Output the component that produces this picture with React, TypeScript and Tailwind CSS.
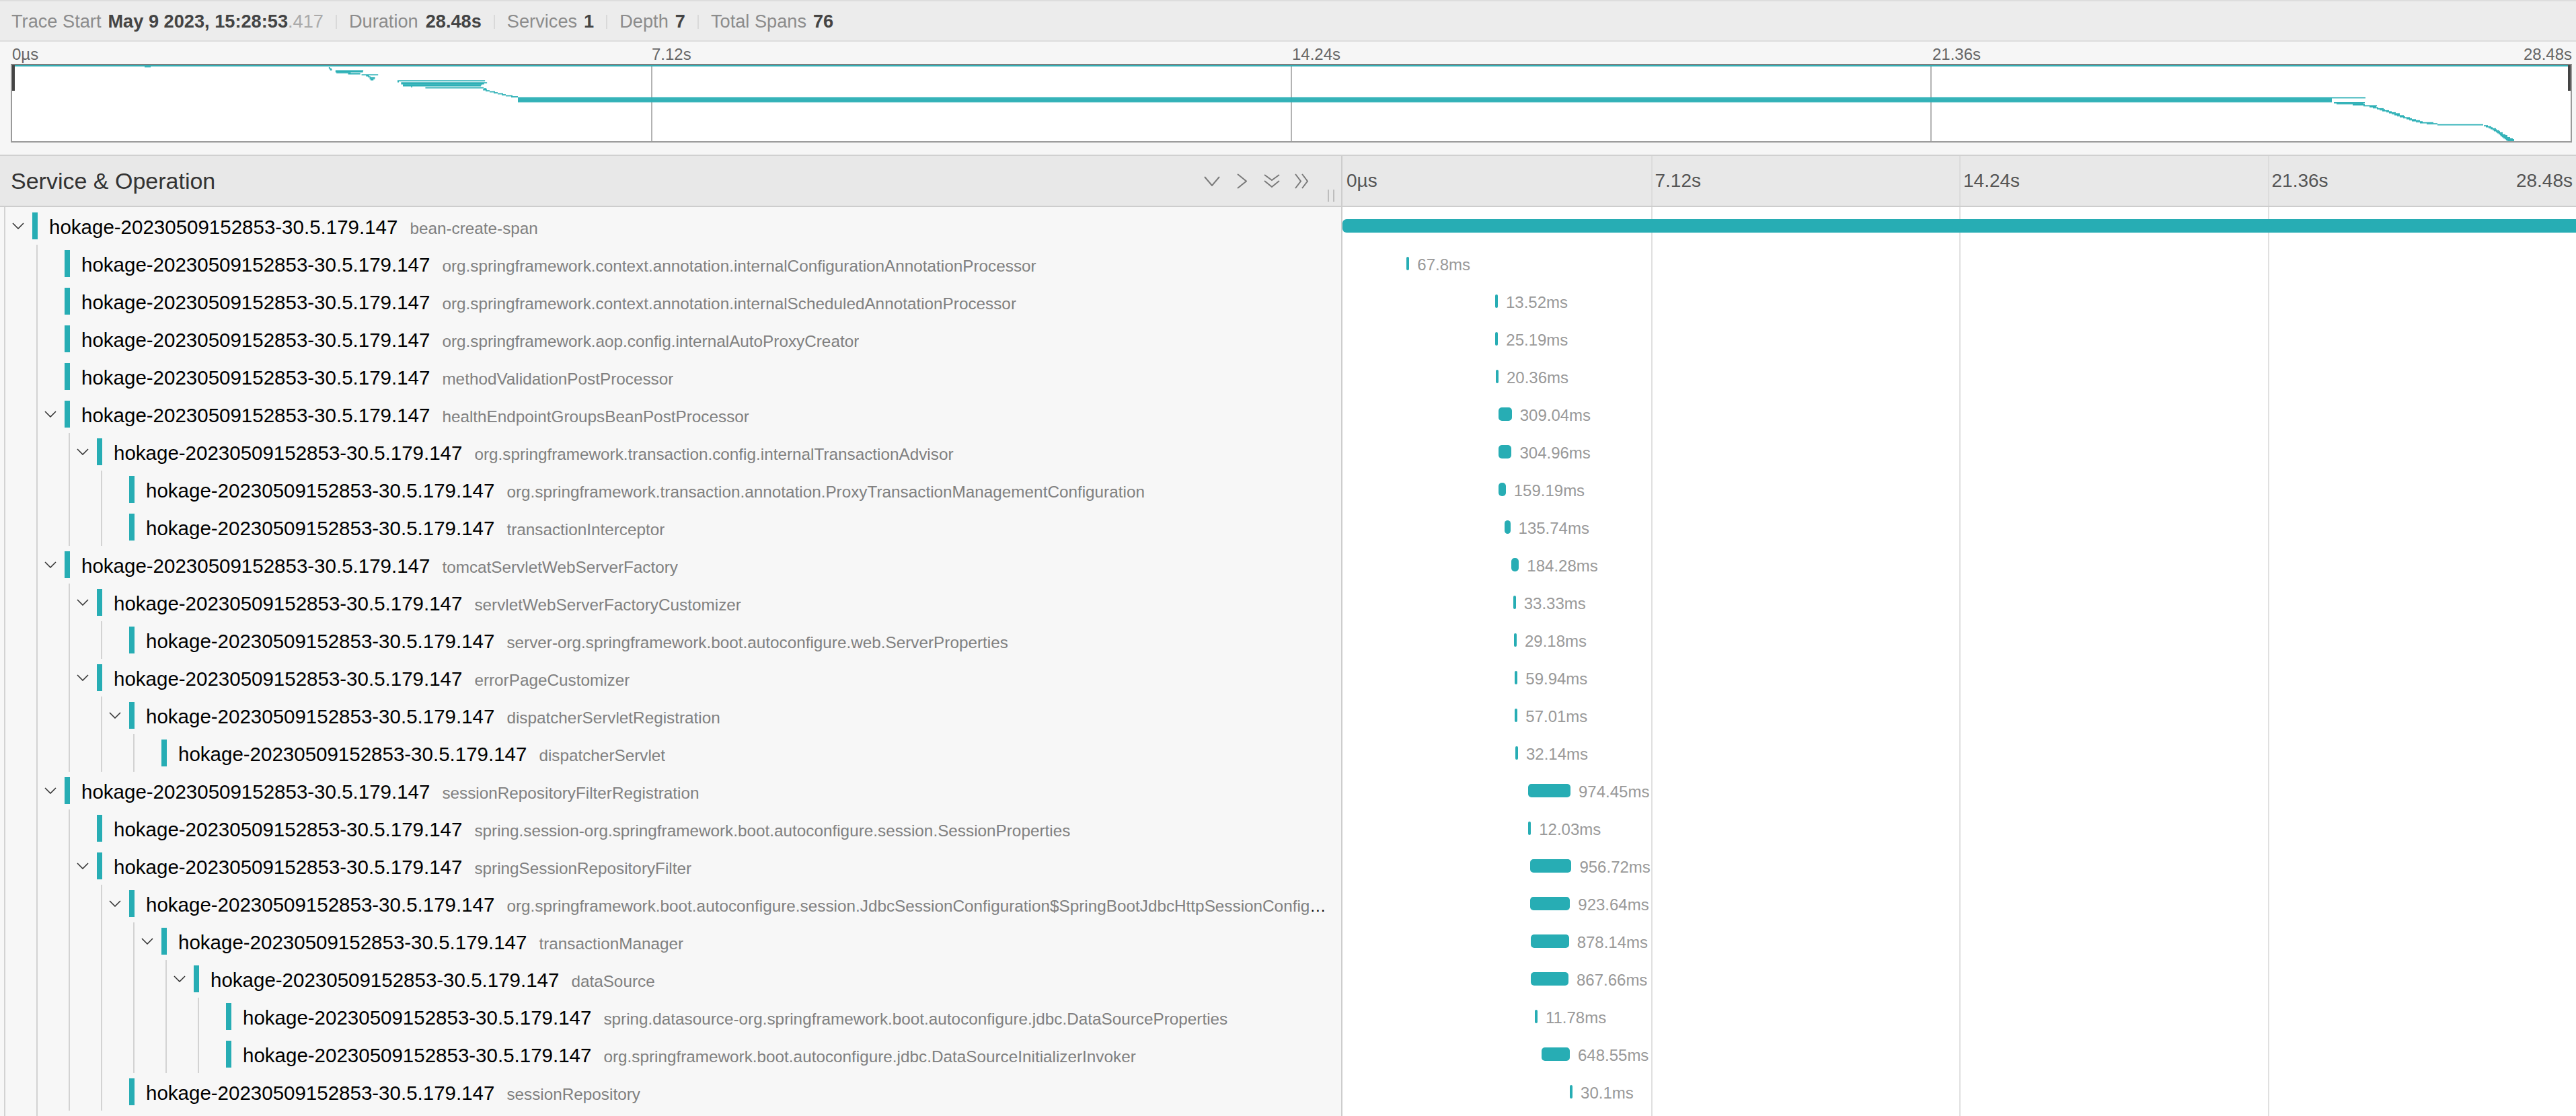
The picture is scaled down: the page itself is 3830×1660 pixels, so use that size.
import React from "react";

const SVC = "hokage-20230509152853-30.5.179.147";
const PX_PER_S = 1834 / 28.48;
const MINI_W = 3804;
const MINI_H = 113;

type Row = {
  d: number;
  op: string;
  kids?: boolean;
  s: number;
  ms: number;
  label?: string;
};

const rows: Row[] = [
  { d: 0, op: "bean-create-span", kids: true, s: 0, ms: 28480 },
  { d: 1, op: "org.springframework.context.annotation.internalConfigurationAnnotationProcessor", s: 1.475, ms: 67.8, label: "67.8ms" },
  { d: 1, op: "org.springframework.context.annotation.internalScheduledAnnotationProcessor", s: 3.525, ms: 13.52, label: "13.52ms" },
  { d: 1, op: "org.springframework.aop.config.internalAutoProxyCreator", s: 3.53, ms: 25.19, label: "25.19ms" },
  { d: 1, op: "methodValidationPostProcessor", s: 3.54, ms: 20.36, label: "20.36ms" },
  { d: 1, op: "healthEndpointGroupsBeanPostProcessor", kids: true, s: 3.6, ms: 309.04, label: "309.04ms" },
  { d: 2, op: "org.springframework.transaction.config.internalTransactionAdvisor", kids: true, s: 3.6, ms: 304.96, label: "304.96ms" },
  { d: 3, op: "org.springframework.transaction.annotation.ProxyTransactionManagementConfiguration", s: 3.61, ms: 159.19, label: "159.19ms" },
  { d: 3, op: "transactionInterceptor", s: 3.74, ms: 135.74, label: "135.74ms" },
  { d: 1, op: "tomcatServletWebServerFactory", kids: true, s: 3.89, ms: 184.28, label: "184.28ms" },
  { d: 2, op: "servletWebServerFactoryCustomizer", kids: true, s: 3.94, ms: 33.33, label: "33.33ms" },
  { d: 3, op: "server-org.springframework.boot.autoconfigure.web.ServerProperties", s: 3.96, ms: 29.18, label: "29.18ms" },
  { d: 2, op: "errorPageCustomizer", kids: true, s: 3.98, ms: 59.94, label: "59.94ms" },
  { d: 3, op: "dispatcherServletRegistration", kids: true, s: 3.98, ms: 57.01, label: "57.01ms" },
  { d: 4, op: "dispatcherServlet", s: 3.99, ms: 32.14, label: "32.14ms" },
  { d: 1, op: "sessionRepositoryFilterRegistration", kids: true, s: 4.29, ms: 974.45, label: "974.45ms" },
  { d: 2, op: "spring.session-org.springframework.boot.autoconfigure.session.SessionProperties", s: 4.29, ms: 12.03, label: "12.03ms" },
  { d: 2, op: "springSessionRepositoryFilter", kids: true, s: 4.33, ms: 956.72, label: "956.72ms" },
  { d: 3, op: "org.springframework.boot.autoconfigure.session.JdbcSessionConfiguration$SpringBootJdbcHttpSessionConfiguration", kids: true, s: 4.33, ms: 923.64, label: "923.64ms" },
  { d: 4, op: "transactionManager", kids: true, s: 4.35, ms: 878.14, label: "878.14ms" },
  { d: 5, op: "dataSource", kids: true, s: 4.35, ms: 867.66, label: "867.66ms" },
  { d: 6, op: "spring.datasource-org.springframework.boot.autoconfigure.jdbc.DataSourceProperties", s: 4.44, ms: 11.78, label: "11.78ms" },
  { d: 6, op: "org.springframework.boot.autoconfigure.jdbc.DataSourceInitializerInvoker", s: 4.6, ms: 648.55, label: "648.55ms" },
  { d: 3, op: "sessionRepository", s: 5.25, ms: 30.1, label: "30.1ms" },
];

// rest of the 76 spans for the minimap, [x, w] in minimap px
const extraMini: [number, number][] = [
  [700, 6], [704, 6], [710, 8], [716, 6], [722, 8], [728, 6], [734, 10], [742, 10],
  [752, 2747], [752, 2697], [752, 2697], [752, 2697], [752, 2697],
  [3452, 46], [3456, 40], [3480, 18], [3496, 20], [3505, 10], [3510, 8],
  [3516, 10], [3520, 8], [3524, 10], [3530, 8], [3534, 10], [3538, 12],
  [3542, 8], [3546, 10], [3550, 8], [3555, 10], [3560, 8], [3564, 10],
  [3568, 12], [3574, 10], [3580, 20], [3590, 16], [3606, 68], [3675, 6],
  [3678, 8], [3682, 6], [3685, 8], [3688, 6], [3690, 8], [3693, 6],
  [3695, 8], [3697, 6], [3699, 8], [3700, 10], [3702, 8], [3704, 10],
  [3706, 12], [3708, 12], [3710, 10],
];

const miniSpans: [number, number][] = [
  ...rows.map((r): [number, number] => [
    (r.s / 28.48) * MINI_W,
    r.d === 0 ? MINI_W : Math.max(2, (r.ms / 1000 / 28.48) * MINI_W),
  ]),
  ...extraMini,
];

const Chevron = () => (
  <svg width="18" height="10" viewBox="0 0 18 10" className="ml-[10px] flex-none">
    <polyline points="1,1 9,9 17,1" fill="none" stroke="#333" strokeWidth="1.6" />
  </svg>
);

const Guides = ({ d, kids }: { d: number; kids?: boolean }) => (
  <>
    {Array.from({ length: d + 1 }).map((_, k) => (
      <span key={k} className="flex h-full w-[48px] flex-none items-center">
        <span className="ml-[6px] h-full w-[2px] flex-none bg-[#d3d3d3]" />
        {k === d && kids && <Chevron />}
      </span>
    ))}
  </>
);

const Sep = () => <span className="mx-[18px] h-[21px] w-[2px] bg-[#d9d9d9]" />;

const Minimap = () => {
  const rowH = MINI_H / 76;
  return (
    <svg width={MINI_W} height={MINI_H} viewBox={`0 0 ${MINI_W} ${MINI_H}`} className="block">
      {[951, 1902, 2853].map((x) => (
        <line key={x} x1={x} x2={x} y1={0} y2={MINI_H} stroke="#9a9a9a" strokeWidth="1.5" />
      ))}
      {miniSpans.map(([x, w], i) => (
        <rect key={i} x={x} y={i * rowH} width={w} height={rowH + 0.3} fill="#2db0b6" />
      ))}
      <rect x={0} y={0} width={4} height={38} fill="#444" />
      <rect x={MINI_W - 4} y={0} width={4} height={38} fill="#444" />
    </svg>
  );
};

const HeaderIcons = () => (
  <div className="flex items-center self-stretch pr-[10px]">
    <svg width="24" height="15" viewBox="0 0 24 15">
      <polyline points="1,1 12,14 23,1" fill="none" stroke="#7a7a7a" strokeWidth="2" />
    </svg>
    <svg width="15" height="23" viewBox="0 0 15 23" className="ml-[25px]">
      <polyline points="1,1 14,11.5 1,22" fill="none" stroke="#7a7a7a" strokeWidth="2" />
    </svg>
    <svg width="24" height="21" viewBox="0 0 24 21" className="ml-[25px]">
      <polyline points="1,1 12,9 23,1" fill="none" stroke="#7a7a7a" strokeWidth="2" />
      <polyline points="1,10 12,19 23,10" fill="none" stroke="#7a7a7a" strokeWidth="2" />
    </svg>
    <svg width="21" height="23" viewBox="0 0 21 23" className="ml-[22px]">
      <polyline points="1,1 9,11.5 1,22" fill="none" stroke="#7a7a7a" strokeWidth="2" />
      <polyline points="11,1 19,11.5 11,22" fill="none" stroke="#7a7a7a" strokeWidth="2" />
    </svg>
    <div className="mb-[6px] ml-[28px] flex h-[18px] gap-[6px] self-end">
      <span className="w-[2px] bg-[#bdbdbd]" />
      <span className="w-[2px] bg-[#bdbdbd]" />
    </div>
  </div>
);

export default function App() {
  return (
    <div className="h-[1660px] w-[3830px] overflow-hidden bg-white font-['Liberation_Sans',Arial,sans-serif]">
      {/* trace summary */}
      <div className="flex h-[62px] items-center border-y-2 border-[#dddddd] bg-[#ececec] px-[17px] pt-[3px] text-[27.2px] text-[#8c8c8c]">
        <span>Trace Start</span>
        <span className="ml-[10px] font-bold text-[#444]">
          May 9 2023, 15:28:53<span className="font-normal text-[#aaa]">.417</span>
        </span>
        <Sep />
        <span>Duration</span>
        <span className="ml-[11px] font-bold text-[#444]">28.48s</span>
        <Sep />
        <span>Services</span>
        <span className="ml-[10px] font-bold text-[#444]">1</span>
        <Sep />
        <span>Depth</span>
        <span className="ml-[10px] font-bold text-[#444]">7</span>
        <Sep />
        <span>Total Spans</span>
        <span className="ml-[10px] font-bold text-[#444]">76</span>
      </div>

      {/* minimap */}
      <div className="border-b-2 border-[#d0d0d0] bg-[#f6f6f6] pb-[18px] pl-[16px] pr-[6px] pt-[4px]">
        <div className="grid h-[29px] grid-cols-4 items-center text-[24px] leading-none text-[#666]">
          <span className="pl-[2px]">0µs</span>
          <span className="pl-[1px]">7.12s</span>
          <span className="pl-[1px]">14.24s</span>
          <div className="flex justify-between pl-[1px]">
            <span>21.36s</span>
            <span>28.48s</span>
          </div>
        </div>
        <div className="h-[117px] border-2 border-[#9a9a9a] border-t-[#7d7d7d] bg-white">
          <Minimap />
        </div>
      </div>

      {/* column header */}
      <div className="flex h-[76px] border-b-2 border-[#cdcdcd] bg-[#e8e8e8]">
        <div className="flex w-[1994px] flex-none items-center justify-between pl-[16px]">
          <span className="text-[34px] text-[#333]">Service &amp; Operation</span>
          <HeaderIcons />
        </div>
        <div className="grid flex-1 grid-cols-4 border-l-2 border-[#cdcdcd] text-[28px] text-[#555]">
          <div className="flex items-center pl-[6px]">0µs</div>
          <div className="flex items-center border-l-2 border-[#dcdcdc] pl-[4px]">7.12s</div>
          <div className="flex items-center border-l-2 border-[#dcdcdc] pl-[4px]">14.24s</div>
          <div className="flex items-center justify-between border-l-2 border-[#dcdcdc] pl-[4px] pr-[5px]">
            <span>21.36s</span>
            <span>28.48s</span>
          </div>
        </div>
      </div>

      {/* span rows */}
      <div className="flex">
        <div className="w-[1994px] flex-none bg-[#f7f7f7]">
          {rows.map((r, i) => (
            <div key={i} className="flex h-[56px] items-center pr-[11px]">
              <Guides d={r.d} kids={r.kids} />
              <span className="h-[40px] w-[8px] flex-none bg-[#27adb4]" />
              <div className="ml-[17px] mt-[4px] min-w-0 truncate text-[24.3px] text-black">
                <span className="text-[29.5px]">{SVC}</span>
                <span className="ml-[18px] text-[#808080]">{r.op}</span>
              </div>
            </div>
          ))}
          {/* next row, only its guides show above the fold */}
          <div className="flex h-[56px] items-center">
            <Guides d={1} />
          </div>
        </div>
        <div className="relative flex-1 overflow-hidden border-l-2 border-[#cdcdcd] bg-white">
          <div className="absolute inset-0 grid grid-cols-4">
            <div />
            <div className="border-l-2 border-[#e0e0e0]" />
            <div className="border-l-2 border-[#e0e0e0]" />
            <div className="border-l-2 border-[#e0e0e0]" />
          </div>
          <div className="relative">
            {rows.map((r, i) => (
              <div
                key={i}
                className="flex h-[56px] items-center whitespace-nowrap"
                style={{ paddingLeft: r.s * PX_PER_S }}
              >
                {r.d === 0 ? (
                  <span className="h-[20px] flex-1 rounded-l-[6px] bg-[#27adb4]" />
                ) : (
                  <span
                    className="h-[20px] flex-none rounded-[5px] bg-[#27adb4]"
                    style={{ width: Math.max(4, (r.ms / 1000) * PX_PER_S) }}
                  />
                )}
                {r.label && <span className="ml-[12px] mt-[4px] text-[24px] text-[#999]">{r.label}</span>}
              </div>
            ))}
          </div>
        </div>
      </div>
    </div>
  );
}
